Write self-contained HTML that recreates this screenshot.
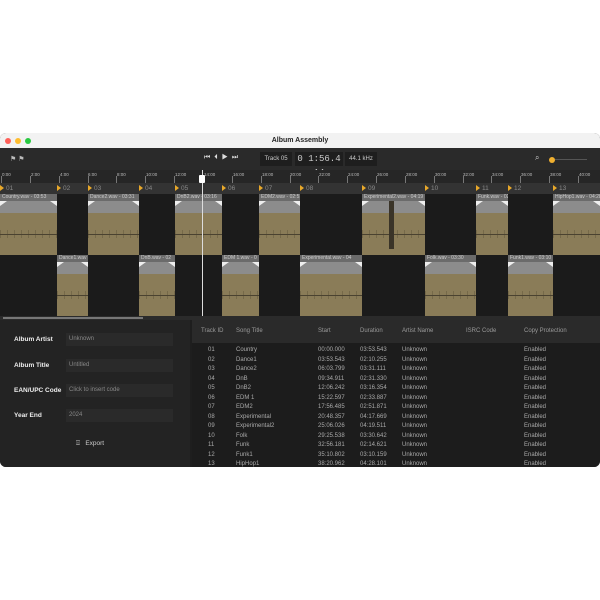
<!DOCTYPE html><html><head><style>
body{margin:0;width:600px;height:600px;background:#fff;font-family:"Liberation Sans",sans-serif;position:relative;overflow:hidden}
.win{position:absolute;left:0;top:133px;width:600px;height:334px;background:#1e1e1e;border-radius:6px;overflow:hidden}
.tb{position:absolute;left:0;top:0;width:600px;height:15px;background:#f2f2f2;text-align:center;font-size:7px;font-weight:bold;line-height:15px;color:#222}
.dot{position:absolute;top:5px;width:6px;height:6px;border-radius:50%}
.tool{position:absolute;top:15px;left:0;width:600px;height:22px;background:#2a2a2a}
.ruler{position:absolute;top:37px;left:0;width:600px;height:13px;background:#262626;font-size:4.5px;color:#bbb}
.ruler span{position:absolute;top:2px}
.ruler i{position:absolute;top:6px;width:1px;height:7px;background:#777}
.hdr{position:absolute;top:50px;left:0;width:600px;height:11px;background:#333;font-size:6.5px;color:#888}
.hdr span{position:absolute;top:2px}
.hdr b{position:absolute;top:2px;width:0;height:0;border-top:3.5px solid transparent;border-bottom:3.5px solid transparent;border-left:4px solid #e8a82a}
.lane{position:absolute;left:0;width:600px;height:61px;background:#1b1b1b}
.clip{position:absolute;top:0;height:61px;background:#8a7c58;overflow:hidden}
.clip .lb{position:absolute;top:0;left:0;right:0;height:7px;background:#6b6b6b;font-size:5px;color:#ccc;white-space:nowrap;overflow:hidden;line-height:7px;padding-left:2px}
.clip .gr{position:absolute;top:7px;left:0;right:0;height:12px;background:#8c8c8c}
.clip .gr:before{content:"";position:absolute;left:0;top:0;border-top:5px solid #eee;border-right:7px solid transparent}
.clip .gr:after{content:"";position:absolute;right:0;top:0;border-top:5px solid #eee;border-left:7px solid transparent}
.clip .cl{position:absolute;left:0;right:0;top:40px;height:1px;background:#4a4230}
.clip .wv{position:absolute;left:0;right:0;top:36px;height:8px;background:repeating-linear-gradient(90deg,rgba(60,50,30,.25) 0 1px,transparent 1px 7px)}
.lbl{position:absolute;left:14px;font-size:6.5px;color:#eee;font-weight:bold}
.inp{position:absolute;left:66px;width:107px;height:13px;background:#2a2a2a;font-size:6px;color:#888;line-height:13px;padding-left:3px;box-sizing:border-box}
.rows{position:absolute;left:0;top:26px;width:400px;font-size:6px;color:#aaa}
.r{position:relative;height:9.5px;line-height:9.5px}
.r span{position:absolute;top:0}
</style></head><body>
<div class="win">
<div class="tb">Album Assembly<div class="dot" style="left:5px;background:#fe5f57"></div><div class="dot" style="left:15px;background:#febc2e"></div><div class="dot" style="left:25px;background:#28c840"></div></div>
<div class="tool">
<div style="position:absolute;left:10px;top:7px;font-size:7px;color:#bbb">⚑ ⚑</div>
<div style="position:absolute;left:204px;top:6px;font-size:7px;color:#ddd;letter-spacing:1px">⏮ ⏴ ▶ ⏭</div>
<div style="position:absolute;left:260px;top:4px;width:32px;height:14px;background:#1e1e1e;color:#ccc;font-size:6px;line-height:14px;text-align:center">Track 05</div>
<div style="position:absolute;left:295px;top:4px;width:48px;height:14px;background:#1e1e1e;color:#ccc;font-size:9px;line-height:14px;text-align:center;font-family:'Liberation Mono',monospace">0 1:56.4 14</div>
<div style="position:absolute;left:345px;top:4px;width:32px;height:14px;background:#1e1e1e;color:#ccc;font-size:6px;line-height:14px;text-align:center">44.1 kHz</div>
<div style="position:absolute;left:535px;top:5px;font-size:8px;color:#ccc">⌕</div>
<div style="position:absolute;left:549px;top:9px;width:6px;height:6px;border-radius:50%;background:#f0b030"></div>
<div style="position:absolute;left:555px;top:11px;width:32px;height:1px;background:#555"></div>
</div>
<div class="ruler">
<span style="left:2px">0:00</span><i style="left:1px"></i><span style="left:31px">2:00</span><i style="left:30px"></i><span style="left:60px">4:00</span><i style="left:59px"></i><span style="left:88px">6:00</span><i style="left:88px"></i><span style="left:117px">8:00</span><i style="left:116px"></i><span style="left:146px">10:00</span><i style="left:145px"></i><span style="left:175px">12:00</span><i style="left:174px"></i><span style="left:204px">14:00</span><i style="left:203px"></i><span style="left:233px">16:00</span><i style="left:232px"></i><span style="left:262px">18:00</span><i style="left:261px"></i><span style="left:290px">20:00</span><i style="left:290px"></i><span style="left:319px">22:00</span><i style="left:318px"></i><span style="left:348px">24:00</span><i style="left:347px"></i><span style="left:377px">26:00</span><i style="left:376px"></i><span style="left:406px">28:00</span><i style="left:405px"></i><span style="left:435px">30:00</span><i style="left:434px"></i><span style="left:463px">32:00</span><i style="left:463px"></i><span style="left:492px">34:00</span><i style="left:491px"></i><span style="left:521px">36:00</span><i style="left:520px"></i><span style="left:550px">38:00</span><i style="left:549px"></i><span style="left:579px">40:00</span><i style="left:578px"></i>
</div>
<div class="hdr">
<b style="left:0"></b><span style="left:6px">01</span><b style="left:57px"></b><span style="left:63px">02</span><b style="left:88px"></b><span style="left:94px">03</span><b style="left:139px"></b><span style="left:145px">04</span><b style="left:175px"></b><span style="left:181px">05</span><b style="left:222px"></b><span style="left:228px">06</span><b style="left:259px"></b><span style="left:265px">07</span><b style="left:300px"></b><span style="left:306px">08</span><b style="left:362px"></b><span style="left:368px">09</span><b style="left:425px"></b><span style="left:431px">10</span><b style="left:476px"></b><span style="left:482px">11</span><b style="left:508px"></b><span style="left:514px">12</span><b style="left:553px"></b><span style="left:559px">13</span>
</div>
<div class="lane" style="top:61px">
<div class="clip" style="left:0;width:57px"><div class="lb">Country.wav - 03:53</div><div class="gr"></div><div class="wv"></div><div class="cl"></div></div>
<div class="clip" style="left:88px;width:51px"><div class="lb">Dance2.wav - 03:31</div><div class="gr"></div><div class="wv"></div><div class="cl"></div></div>
<div class="clip" style="left:175px;width:47px"><div class="lb">DnB2.wav - 03:16</div><div class="gr"></div><div class="wv"></div><div class="cl"></div></div>
<div class="clip" style="left:259px;width:41px"><div class="lb">EDM2.wav - 02:51</div><div class="gr"></div><div class="wv"></div><div class="cl"></div></div>
<div class="clip" style="left:362px;width:63px"><div class="lb">Experimental2.wav - 04:19</div><div class="gr"></div><div class="wv"></div><div class="cl"></div><div style="position:absolute;left:27px;top:7px;width:5px;height:48px;background:#3a3428"></div></div>
<div class="clip" style="left:476px;width:32px"><div class="lb">Funk.wav - 02:14</div><div class="gr"></div><div class="wv"></div><div class="cl"></div></div>
<div class="clip" style="left:553px;width:47px"><div class="lb">HipHop1.wav - 04:28</div><div class="gr"></div><div class="wv"></div><div class="cl"></div></div>
</div>
<div class="lane" style="top:122px">
<div class="clip" style="left:57px;width:31px"><div class="lb">Dance1.wav</div><div class="gr"></div><div class="wv"></div><div class="cl"></div></div>
<div class="clip" style="left:139px;width:36px"><div class="lb">DnB.wav - 02</div><div class="gr"></div><div class="wv"></div><div class="cl"></div></div>
<div class="clip" style="left:222px;width:37px"><div class="lb">EDM 1.wav - 0</div><div class="gr"></div><div class="wv"></div><div class="cl"></div></div>
<div class="clip" style="left:300px;width:62px"><div class="lb">Experimental.wav - 04</div><div class="gr"></div><div class="wv"></div><div class="cl"></div></div>
<div class="clip" style="left:425px;width:51px"><div class="lb">Folk.wav - 03:30</div><div class="gr"></div><div class="wv"></div><div class="cl"></div></div>
<div class="clip" style="left:508px;width:45px"><div class="lb">Funk1.wav - 03:10</div><div class="gr"></div><div class="wv"></div><div class="cl"></div></div>
</div>
<div style="position:absolute;left:202px;top:37px;width:1px;height:146px;background:#ddd"></div>
<div style="position:absolute;left:199px;top:42px;width:6px;height:8px;background:#fff;border-radius:1px"></div>
<div style="position:absolute;left:0;top:183px;width:600px;height:4px;background:#2b2b2b"></div>
<div style="position:absolute;left:3px;top:184px;width:140px;height:2px;background:#777"></div>
<div style="position:absolute;left:0;top:187px;width:190px;height:147px;background:#232323">
<div class="lbl" style="top:16px">Album Artist</div><div class="inp" style="top:13px">Unknown</div>
<div class="lbl" style="top:42px">Album Title</div><div class="inp" style="top:39px">Untitled</div>
<div class="lbl" style="top:67px">EAN/UPC Code</div><div class="inp" style="top:64px">Click to insert code</div>
<div class="lbl" style="top:92px">Year End</div><div class="inp" style="top:89px">2024</div>
<div style="position:absolute;left:76px;top:120px;font-size:6.5px;color:#ccc">⍐&nbsp;&nbsp; Export</div>
</div>
<div style="position:absolute;left:192px;top:187px;width:408px;height:147px;background:#1c1c1c">
<div style="position:absolute;left:0;top:0;width:408px;height:23px;background:#2a2a2a"></div>
<div style="position:absolute;left:0;top:8px;font-size:6px;color:#999;width:400px">
<span style="position:absolute;left:9px">Track ID</span><span style="position:absolute;left:44px">Song Title</span><span style="position:absolute;left:126px">Start</span><span style="position:absolute;left:168px">Duration</span><span style="position:absolute;left:210px">Artist Name</span><span style="position:absolute;left:274px">ISRC Code</span><span style="position:absolute;left:332px">Copy Protection</span></div>
<div class="rows">
<div class="r"><span style="left:16px">01</span><span style="left:44px">Country</span><span style="left:126px">00:00.000</span><span style="left:168px">03:53.543</span><span style="left:210px">Unknown</span><span style="left:332px">Enabled</span></div>
<div class="r"><span style="left:16px">02</span><span style="left:44px">Dance1</span><span style="left:126px">03:53.543</span><span style="left:168px">02:10.255</span><span style="left:210px">Unknown</span><span style="left:332px">Enabled</span></div>
<div class="r"><span style="left:16px">03</span><span style="left:44px">Dance2</span><span style="left:126px">06:03.799</span><span style="left:168px">03:31.111</span><span style="left:210px">Unknown</span><span style="left:332px">Enabled</span></div>
<div class="r"><span style="left:16px">04</span><span style="left:44px">DnB</span><span style="left:126px">09:34.911</span><span style="left:168px">02:31.330</span><span style="left:210px">Unknown</span><span style="left:332px">Enabled</span></div>
<div class="r"><span style="left:16px">05</span><span style="left:44px">DnB2</span><span style="left:126px">12:06.242</span><span style="left:168px">03:16.354</span><span style="left:210px">Unknown</span><span style="left:332px">Enabled</span></div>
<div class="r"><span style="left:16px">06</span><span style="left:44px">EDM 1</span><span style="left:126px">15:22.597</span><span style="left:168px">02:33.887</span><span style="left:210px">Unknown</span><span style="left:332px">Enabled</span></div>
<div class="r"><span style="left:16px">07</span><span style="left:44px">EDM2</span><span style="left:126px">17:56.485</span><span style="left:168px">02:51.871</span><span style="left:210px">Unknown</span><span style="left:332px">Enabled</span></div>
<div class="r"><span style="left:16px">08</span><span style="left:44px">Experimental</span><span style="left:126px">20:48.357</span><span style="left:168px">04:17.669</span><span style="left:210px">Unknown</span><span style="left:332px">Enabled</span></div>
<div class="r"><span style="left:16px">09</span><span style="left:44px">Experimental2</span><span style="left:126px">25:06.026</span><span style="left:168px">04:19.511</span><span style="left:210px">Unknown</span><span style="left:332px">Enabled</span></div>
<div class="r"><span style="left:16px">10</span><span style="left:44px">Folk</span><span style="left:126px">29:25.538</span><span style="left:168px">03:30.642</span><span style="left:210px">Unknown</span><span style="left:332px">Enabled</span></div>
<div class="r"><span style="left:16px">11</span><span style="left:44px">Funk</span><span style="left:126px">32:56.181</span><span style="left:168px">02:14.621</span><span style="left:210px">Unknown</span><span style="left:332px">Enabled</span></div>
<div class="r"><span style="left:16px">12</span><span style="left:44px">Funk1</span><span style="left:126px">35:10.802</span><span style="left:168px">03:10.159</span><span style="left:210px">Unknown</span><span style="left:332px">Enabled</span></div>
<div class="r"><span style="left:16px">13</span><span style="left:44px">HipHop1</span><span style="left:126px">38:20.962</span><span style="left:168px">04:28.101</span><span style="left:210px">Unknown</span><span style="left:332px">Enabled</span></div>
</div>
</div>
</div>
</body></html>
